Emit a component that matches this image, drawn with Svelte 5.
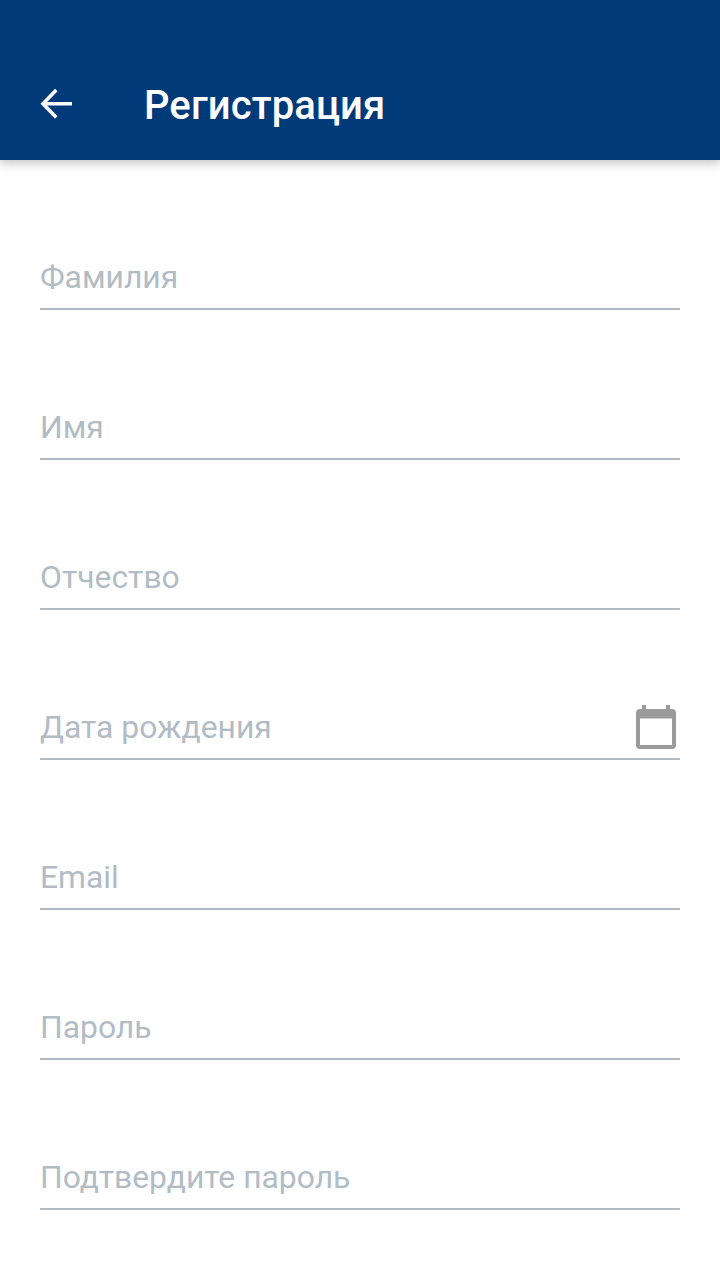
<script>
  const fields = ['Фамилия', 'Имя', 'Отчество', 'Дата рождения', 'Email', 'Пароль', 'Подтвердите пароль'];
</script>

<div class="page">
  <header class="bar">
    <svg class="back" viewBox="0 0 34 32" width="34" height="32" aria-hidden="true">
      <path d="M32 15.7H3M16.3 2 3 15.7l13.3 13.7" fill="none" stroke="#fff" stroke-width="3.6" />
    </svg>
    <h1>Регистрация</h1>
  </header>
  <main class="form">
    {#each fields as label, i}
      <div class="field">
        <span>{label}</span>
        {#if i === 3}
          <svg class="cal" viewBox="0 0 40 44" width="40" height="44" aria-hidden="true">
            <path fill="#9b9b9b" fill-rule="evenodd" d="M4 4h2V0h4v4h20V0h4v4h2a4 4 0 0 1 4 4v32a4 4 0 0 1-4 4H4a4 4 0 0 1-4-4V8a4 4 0 0 1 4-4Zm0 9.5V40h32V13.5Z" />
          </svg>
        {/if}
      </div>
    {/each}
  </main>
</div>

<style>
  :global(body) { margin: 0; background: #fff; }
  .page { width: 720px; height: 1280px; overflow: hidden; font-family: Roboto, sans-serif; background: #fff; }
  .bar {
    height: 160px; box-sizing: border-box; padding: 48px 0 0 40px;
    background: #003a78; display: flex; align-items: center; color: #fff;
    box-shadow: 0 3px 10px rgba(0,0,0,.25);
  }
  .back { flex: none; }
  h1 { margin: 4px 0 0 70px; font-size: 40px; font-weight: 500; line-height: 48px; letter-spacing: 0.1px; }
  .form { padding: 0 40px; display: flex; flex-direction: column; }
  .field {
    height: 150px; box-sizing: border-box; border-bottom: 2px solid #b0bac2;
    display: flex; align-items: flex-end; justify-content: space-between;
    padding-bottom: 11px; color: #b2bcc5; font-size: 31.85px; line-height: 40px;
  }
  .cal { margin: 0 4px -2px 0; }
</style>
